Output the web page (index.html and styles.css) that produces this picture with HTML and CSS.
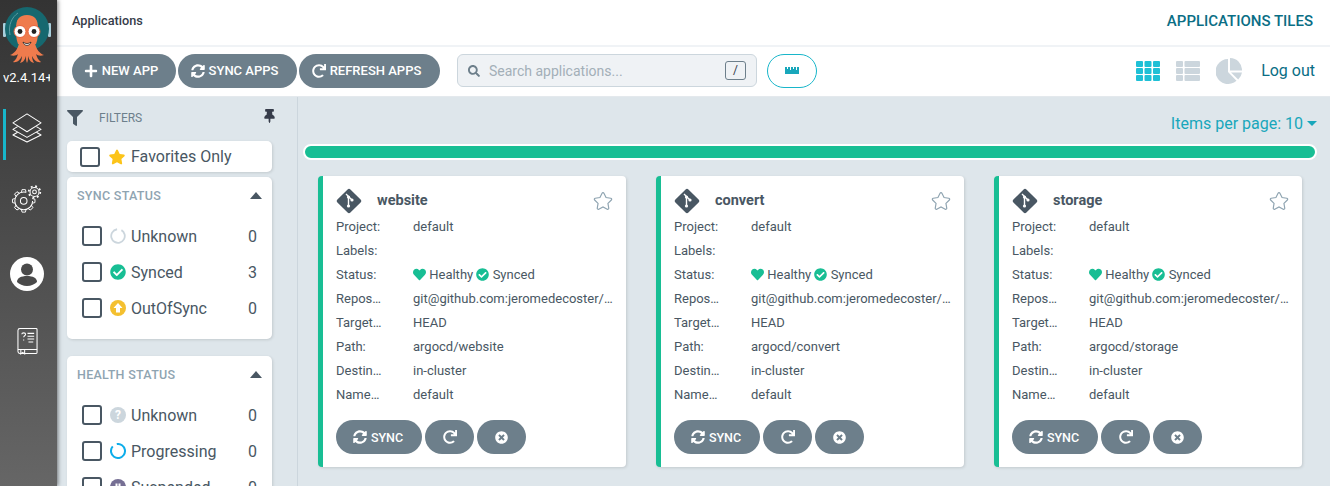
FILE: index.html
```html
<!DOCTYPE html>
<html lang="en">
<head>
    <meta charset="UTF-8">
    <meta name="viewport" content="width=device-width, initial-scale=1.0">
    <title>Applications</title>
    <link rel="stylesheet" href="styles.css">
</head>
<body>
    <svg class="icon-defs" aria-hidden="true">
        <symbol id="i-sync" viewBox="0 0 512 512"><path fill="currentColor" d="M370.72 133.28C339.458 104.008 298.888 87.962 255.848 88c-77.458.068-144.328 53.178-162.791 126.85-1.344 5.363-6.122 9.15-11.651 9.15H24.103c-7.498 0-13.194-6.807-11.807-14.176C33.933 94.924 134.813 8 256 8c66.448 0 126.791 26.136 171.315 68.685L463.03 40.97C478.149 25.851 504 36.559 504 57.941V192c0 13.255-10.745 24-24 24H345.941c-21.382 0-32.09-25.851-16.971-40.971l41.75-41.749zM32 296h134.059c21.382 0 32.09 25.851 16.971 40.971l-41.75 41.75c31.262 29.273 71.835 45.319 114.876 45.28 77.418-.07 144.315-53.144 162.787-126.849 1.344-5.363 6.122-9.15 11.651-9.15h57.304c7.498 0 13.194 6.807 11.807 14.176C478.067 417.076 377.187 504 256 504c-66.448 0-126.791-26.136-171.315-68.685L48.97 471.03C33.851 486.149 8 475.441 8 454.059V320c0-13.255 10.745-24 24-24z"/></symbol>
        <symbol id="i-redo" viewBox="0 0 512 512"><path fill="currentColor" d="M500.33 0h-47.41a12 12 0 0 0-12 12.57l4 82.76A247.42 247.42 0 0 0 256 8C119.34 8 7.9 119.53 8 256.19 8.1 393.07 119.1 504 256 504a247.1 247.1 0 0 0 166.18-63.91 12 12 0 0 0 .48-17.43l-34-34a12 12 0 0 0-16.38-.55A176 176 0 1 1 402.1 157.8l-101.53-4.87a12 12 0 0 0-12.57 12v47.41a12 12 0 0 0 12 12h200.33a12 12 0 0 0 12-12V12a12 12 0 0 0-12-12z"/></symbol>
        <symbol id="i-times" viewBox="0 0 512 512"><path fill="currentColor" d="M256 8C119 8 8 119 8 256s111 248 248 248 248-111 248-248S393 8 256 8zm121.6 313.1c4.7 4.7 4.7 12.3 0 17L338 377.6c-4.7 4.7-12.3 4.7-17 0L256 312l-65.1 65.6c-4.7 4.7-12.3 4.7-17 0L134.4 338c-4.7-4.7-4.7-12.3 0-17l65.6-65-65.6-65.1c-4.7-4.7-4.7-12.3 0-17l39.6-39.6c4.7-4.7 12.3-4.7 17 0l65 65.7 65.1-65.6c4.7-4.7 12.3-4.7 17 0l39.6 39.6c4.7 4.7 4.7 12.3 0 17L312 256l65.6 65.1z"/></symbol>
        <symbol id="i-check" viewBox="0 0 512 512"><path fill="currentColor" d="M504 256c0 136.967-111.033 248-248 248S8 392.967 8 256 119.033 8 256 8s248 111.033 248 248zM227.314 387.314l184-184c6.248-6.248 6.248-16.379 0-22.627l-22.627-22.627c-6.248-6.249-16.379-6.249-22.628 0L216 308.118l-70.059-70.059c-6.248-6.248-16.379-6.248-22.628 0l-22.627 22.627c-6.248 6.248-6.248 16.379 0 22.627l104 104c6.249 6.25 16.379 6.25 22.628.001z"/></symbol>
        <symbol id="i-heart" viewBox="0 0 512 512"><path fill="currentColor" d="M462.3 62.6C407.5 15.9 326 24.3 275.7 76.2L256 96.5l-19.7-20.3C186.1 24.3 104.5 15.9 49.7 62.6c-62.8 53.6-66.1 149.8-9.9 207.9l193.5 199.8c12.5 12.9 32.8 12.9 45.3 0l193.5-199.8c56.3-58.1 53-154.3-9.8-207.9z"/></symbol>
        <symbol id="i-star" viewBox="-20 -20 616 552"><path d="M259.3 17.8L194 150.2 47.9 171.5c-26.2 3.8-36.7 36.1-17.7 54.6l105.7 103-25 145.5c-4.5 26.3 23.2 46 46.4 33.7L288 439.6l130.7 68.7c23.2 12.2 50.9-7.4 46.4-33.7l-25-145.5 105.7-103c19-18.5 8.5-50.8-17.7-54.6L382 150.2 316.7 17.8c-11.7-23.6-45.6-23.9-57.4 0z"/></symbol>
        <symbol id="i-git" viewBox="0 0 26 26">
            <rect x="3.8" y="3.8" width="18.4" height="18.4" rx="2" transform="rotate(45 13 13)" fill="currentColor"/>
            <path d="M10 6l6 6M12.5 9v9" fill="none" stroke="#fff" stroke-width="1.4"/>
            <circle cx="12.5" cy="9" r="1.6" fill="#fff"/><circle cx="16" cy="12" r="1.6" fill="#fff"/><circle cx="12.5" cy="18" r="1.6" fill="#fff"/>
        </symbol>
        <symbol id="i-tooth" viewBox="0 0 6 6" overflow="visible"><path d="M.5 4L1.2 1H4.8L5.500 4" fill="none" stroke="#fff" stroke-width="1"/></symbol>
    </svg>

    <nav class="sidebar">
        <svg class="logo" viewBox="0 0 48 58" aria-label="Argo logo">
            <rect x="0" y="16" width="3" height="14" rx="1" fill="#a8cfdc"/>
            <rect x="45" y="16" width="3" height="14" rx="1" fill="#a8cfdc"/>
            <circle cx="24" cy="22" r="22" fill="#16686f"/>
            <path d="M7 28C5 18 9 10 15 6" fill="none" stroke="#5a9aa0" stroke-width="1"/>
            <path d="M24 8c-8 0-11 5-11 13 0 6 0 11 2 16h18c2-5 2-10 2-16 0-8-3-13-11-13z" fill="#ef7b4d"/>
            <path d="M16 36c-1 6-5 11-9 12 3 1 6 1 8-1-1 3-2 6-5 8 4 1 7-2 9-6 0 3-1 5-2 7 4-1 5-4 6-7 0 3 0 5 1 7 1-2 1-4 1-7 1 3 2 6 6 7-1-2-2-4-2-7 2 4 5 7 9 6-3-2-4-5-5-8 2 2 5 2 8 1-4-1-8-6-9-12z" fill="#ef7b4d"/>
            <circle cx="17" cy="24.5" r="6" fill="#fff" stroke="#e8613a" stroke-width="1"/>
            <circle cx="31" cy="24.5" r="6" fill="#fff" stroke="#e8613a" stroke-width="1"/>
            <circle cx="17" cy="24.5" r="2.4" fill="#222"/><circle cx="31" cy="24.5" r="2.4" fill="#222"/>
            <path d="M20 35c2.5 2 5.5 2 8 0-1 4.5-7 4.5-8 0z" fill="#fff" stroke="#222" stroke-width=".8"/>
        </svg>
        <div class="version">v2.4.14+53d6e2c</div>
        <div class="nav-item active">
            <svg class="nav-icon" viewBox="0 0 32 32"><g fill="none" stroke="#fff" stroke-width="1.1" stroke-linejoin="round"><path d="M16 1L31 10.5 16 20 1 10.5z"/><path d="M6 14.5L1 17.5 16 26l15-8.500-5-3"/><path d="M6 20.5L1 23.5 16 31l15-7.500-5-3"/></g></svg>
        </div>
        <div class="nav-item">
            <svg class="nav-icon" viewBox="0 0 32 32">
                <circle cx="12.5" cy="18" r="3.5" fill="none" stroke="#fff" stroke-width="1.1"/>
                <circle cx="12.5" cy="18" r="9.5" fill="none" stroke="#fff" stroke-width="1.1" stroke-dasharray="47 13"/>
                <use href="#i-tooth" x="9.5" y="5" width="6" height="6"/>
                <use href="#i-tooth" x="9.5" y="5" width="6" height="6" transform="rotate(-45 12.5 18)"/>
                <use href="#i-tooth" x="9.5" y="5" width="6" height="6" transform="rotate(-90 12.5 18)"/>
                <use href="#i-tooth" x="9.5" y="5" width="6" height="6" transform="rotate(-135 12.5 18)"/>
                <use href="#i-tooth" x="9.5" y="5" width="6" height="6" transform="rotate(180 12.5 18)"/>
                <use href="#i-tooth" x="9.5" y="5" width="6" height="6" transform="rotate(135 12.5 18)"/>
                <use href="#i-tooth" x="9.5" y="5" width="6" height="6" transform="rotate(90 12.5 18)"/>
                <circle cx="24" cy="8.5" r="2" fill="none" stroke="#fff" stroke-width="1.1"/>
                <circle cx="24" cy="8.5" r="4.8" fill="none" stroke="#fff" stroke-width="1.1"/>
                <circle cx="24" cy="8.5" r="6.2" fill="none" stroke="#fff" stroke-width="1.8" stroke-dasharray="2 2.87"/>
            </svg>
        </div>
        <div class="nav-item nav-item-user">
            <svg class="nav-user" viewBox="0 0 34 34"><circle cx="17" cy="17" r="17" fill="#fff"/><circle cx="17" cy="12.5" r="6" fill="#4a4a4a"/><path d="M7 25c0-4 4-6 10-6s10 2 10 6c-2 2-6 4-10 4s-8-2-10-4z" fill="#4a4a4a"/></svg>
        </div>
        <div class="nav-item">
            <svg class="nav-book" viewBox="0 0 22 28"><g fill="none" stroke="#fff" stroke-width="1.1"><path d="M3 1h17a1 1 0 0 1 1 1v24a1 1 0 0 1-1 1H3a2 2 0 0 1-2-2V3a2 2 0 0 1 2-2z"/><path d="M1 23h20M4 23v4.5l2-1.5 2 1.500V23"/><path d="M5 7c0-2 4-2 4 0 0 1.500-2 1.500-2 3M7 12.5v1M11 6h7M11 9h7M11 12h7M12 15h5"/></g></svg>
        </div>
    </nav>

    <div class="page">
        <header class="topbar">
            <span class="topbar-title">Applications</span>
            <span class="topbar-crumb">APPLICATIONS TILES</span>
        </header>

        <div class="toolbar">
            <button type="button" class="btn btn-new"><svg class="btn-icon" viewBox="0 0 448 512"><path fill="currentColor" d="M416 208H272V64c0-17.67-14.33-32-32-32h-32c-17.67 0-32 14.33-32 32v144H32c-17.67 0-32 14.33-32 32v32c0 17.67 14.33 32 32 32h144v144c0 17.67 14.33 32 32 32h32c17.67 0 32-14.33 32-32V304h144c17.67 0 32-14.33 32-32v-32c0-17.67-14.33-32-32-32z"/></svg>NEW APP</button>
            <button type="button" class="btn btn-sync"><svg class="btn-icon"><use href="#i-sync"/></svg>SYNC APPS</button>
            <button type="button" class="btn btn-refresh"><svg class="btn-icon"><use href="#i-redo"/></svg>REFRESH APPS</button>

            <div class="search">
                <svg class="search-icon" viewBox="0 0 512 512"><path fill="currentColor" d="M505 442.7L405.3 343c-4.5-4.5-10.6-7-17-7H372c27.6-35.3 44-79.7 44-128C416 93.1 322.9 0 208 0S0 93.1 0 208s93.1 208 208 208c48.3 0 92.7-16.4 128-44v16.3c0 6.4 2.5 12.5 7 17l99.7 99.7c9.4 9.4 24.6 9.4 33.9 0l28.3-28.3c9.4-9.4 9.4-24.6.1-34zM208 336c-70.7 0-128-57.2-128-128 0-70.7 57.2-128 128-128 70.7 0 128 57.2 128 128 0 70.7-57.2 128-128 128z"/></svg>
                <span class="search-text">Search applications...</span>
                <span class="search-key">/</span>
            </div>
            <button type="button" class="ruler-btn"><svg class="ruler" viewBox="0 0 15 7"><path fill="currentColor" d="M0 0h2v2h1V0h2v3h1V0h2v2h1V0h2v3h1V0h2v7H0z"/></svg></button>

            <div class="views">
                <svg class="view-icon" viewBox="0 0 24 20"><g fill="#1fc0d6"><rect width="7" height="6" rx="1"/><rect x="8.5" width="7" height="6" rx="1"/><rect x="17" width="7" height="6" rx="1"/><rect y="7" width="7" height="6" rx="1"/><rect x="8.5" y="7" width="7" height="6" rx="1"/><rect x="17" y="7" width="7" height="6" rx="1"/><rect y="14" width="7" height="6" rx="1"/><rect x="8.5" y="14" width="7" height="6" rx="1"/><rect x="17" y="14" width="7" height="6" rx="1"/></g></svg>
                <svg class="view-icon" viewBox="0 0 24 20"><g fill="#ccd6dd"><rect width="7" height="6" rx="1"/><rect x="8.5" width="15.5" height="6" rx="1"/><rect y="7" width="7" height="6" rx="1"/><rect x="8.5" y="7" width="15.5" height="6" rx="1"/><rect y="14" width="7" height="6" rx="1"/><rect x="8.5" y="14" width="15.5" height="6" rx="1"/></g></svg>
                <svg class="view-pie" viewBox="0 0 26 26"><g fill="#ccd6dd"><path d="M12 1a12.5 12.5 0 1 0 8.5 21.7L12 14z"/><path d="M14 0a12 12 0 0 1 12 12.5H14z"/><path d="M15 14.5h11a12 12 0 0 1-3.8 7z"/></g></svg>
                <span class="logout">Log out</span>
            </div>
        </div>

        <div class="content">
            <aside class="filters">
                <div class="filters-head">
                    <svg class="filters-funnel" viewBox="0 0 512 512"><path fill="currentColor" d="M487.976 0H24.028C2.71 0-8.047 25.866 7.058 40.971L192 225.941V432c0 7.831 3.821 15.17 10.237 19.662l80 55.98C298.02 518.69 320 507.493 320 487.98V225.941l184.947-184.97C520.021 25.896 509.338 0 487.976 0z"/></svg>
                    <span class="filters-title">FILTERS</span>
                    <svg class="filters-pin" viewBox="0 0 384 512"><path fill="currentColor" d="M298.028 214.267L285.793 96H328c13.255 0 24-10.745 24-24V24c0-13.255-10.745-24-24-24H56C42.745 0 32 10.745 32 24v48c0 13.255 10.745 24 24 24h42.207L85.972 214.267C37.465 236.82 0 277.261 0 328c0 13.255 10.745 24 24 24h136v104.007c0 1.242.289 2.467.845 3.578l24 48c2.941 5.882 11.364 5.893 14.311 0l24-48a8.008 8.008 0 0 0 .845-3.578V352h136c13.255 0 24-10.745 24-24-.001-51.183-37.983-91.42-85.973-113.733z"/></svg>
                </div>

                <div class="filter-card favorites">
                    <span class="checkbox"></span>
                    <svg class="fav-star"><use href="#i-star"/></svg>
                    <span class="filter-label">Favorites Only</span>
                </div>

                <div class="filter-card filter-group">
                    <div class="group-head"><span>SYNC STATUS</span><span class="caret-up"></span></div>
                    <div class="filter-row">
                        <span class="checkbox"></span>
                        <svg class="status-icon" viewBox="0 0 16 16"><circle cx="8" cy="8" r="6.8" fill="none" stroke="#ccd6dd" stroke-width="1.8" stroke-dasharray="38 5" transform="rotate(-60 8 8)"/></svg>
                        <span class="filter-label">Unknown</span><span class="filter-count">0</span>
                    </div>
                    <div class="filter-row">
                        <span class="checkbox"></span>
                        <svg class="status-icon synced"><use href="#i-check"/></svg>
                        <span class="filter-label">Synced</span><span class="filter-count">3</span>
                    </div>
                    <div class="filter-row">
                        <span class="checkbox"></span>
                        <svg class="status-icon" viewBox="0 0 16 16"><circle cx="8" cy="8" r="8" fill="#f4c030"/><path d="M8 3L12.5 8H10v4.5H6V8H3.5z" fill="#fff"/></svg>
                        <span class="filter-label">OutOfSync</span><span class="filter-count">0</span>
                    </div>
                </div>

                <div class="filter-card filter-group">
                    <div class="group-head"><span>HEALTH STATUS</span><span class="caret-up"></span></div>
                    <div class="filter-row">
                        <span class="checkbox"></span>
                        <span class="status-icon help">?</span>
                        <span class="filter-label">Unknown</span><span class="filter-count">0</span>
                    </div>
                    <div class="filter-row">
                        <span class="checkbox"></span>
                        <svg class="status-icon" viewBox="0 0 16 16"><circle cx="8" cy="8" r="7" fill="none" stroke="#0dadea" stroke-width="2" stroke-dasharray="39 5" transform="rotate(-100 8 8)"/></svg>
                        <span class="filter-label">Progressing</span><span class="filter-count">0</span>
                    </div>
                    <div class="filter-row">
                        <span class="checkbox"></span>
                        <svg class="status-icon" viewBox="0 0 16 16"><circle cx="8" cy="8" r="8" fill="#766f94"/><path d="M5.5 4.5h2v7h-2zM8.5 4.5h2v7h-2z" fill="#fff"/></svg>
                        <span class="filter-label">Suspended</span><span class="filter-count">0</span>
                    </div>
                </div>
            </aside>

            <main class="main">
                <div class="per-page">Items per page: 10 <span class="caret-down"></span></div>
                <div class="health-bar"></div>

                <div class="cards">
                    <div class="app-card">
                        <div class="card-head">
                            <svg class="git-icon"><use href="#i-git"/></svg>
                            <span class="card-name">website</span>
                            <svg class="card-star"><use href="#i-star"/></svg>
                        </div>
                        <div class="card-row"><span class="card-key">Project:</span><span class="card-val">default</span></div>
                        <div class="card-row"><span class="card-key">Labels:</span><span class="card-val"></span></div>
                        <div class="card-row"><span class="card-key">Status:</span><span class="card-val"><svg class="mini-icon"><use href="#i-heart"/></svg> Healthy <svg class="mini-icon"><use href="#i-check"/></svg> Synced</span></div>
                        <div class="card-row"><span class="card-key">Repos…</span><span class="card-val">git@github.com:jeromedecoster/…</span></div>
                        <div class="card-row"><span class="card-key">Target…</span><span class="card-val">HEAD</span></div>
                        <div class="card-row"><span class="card-key">Path:</span><span class="card-val">argocd/website</span></div>
                        <div class="card-row"><span class="card-key">Destin…</span><span class="card-val">in-cluster</span></div>
                        <div class="card-row"><span class="card-key">Name…</span><span class="card-val">default</span></div>
                        <div class="card-actions">
                            <button type="button" class="btn btn-card-sync"><svg class="btn-icon"><use href="#i-sync"/></svg>SYNC</button>
                            <button type="button" class="btn btn-card-icon"><svg class="btn-icon"><use href="#i-redo"/></svg></button>
                            <button type="button" class="btn btn-card-icon"><svg class="btn-icon small"><use href="#i-times"/></svg></button>
                        </div>
                    </div>

                    <div class="app-card">
                        <div class="card-head">
                            <svg class="git-icon"><use href="#i-git"/></svg>
                            <span class="card-name">convert</span>
                            <svg class="card-star"><use href="#i-star"/></svg>
                        </div>
                        <div class="card-row"><span class="card-key">Project:</span><span class="card-val">default</span></div>
                        <div class="card-row"><span class="card-key">Labels:</span><span class="card-val"></span></div>
                        <div class="card-row"><span class="card-key">Status:</span><span class="card-val"><svg class="mini-icon"><use href="#i-heart"/></svg> Healthy <svg class="mini-icon"><use href="#i-check"/></svg> Synced</span></div>
                        <div class="card-row"><span class="card-key">Repos…</span><span class="card-val">git@github.com:jeromedecoster/…</span></div>
                        <div class="card-row"><span class="card-key">Target…</span><span class="card-val">HEAD</span></div>
                        <div class="card-row"><span class="card-key">Path:</span><span class="card-val">argocd/convert</span></div>
                        <div class="card-row"><span class="card-key">Destin…</span><span class="card-val">in-cluster</span></div>
                        <div class="card-row"><span class="card-key">Name…</span><span class="card-val">default</span></div>
                        <div class="card-actions">
                            <button type="button" class="btn btn-card-sync"><svg class="btn-icon"><use href="#i-sync"/></svg>SYNC</button>
                            <button type="button" class="btn btn-card-icon"><svg class="btn-icon"><use href="#i-redo"/></svg></button>
                            <button type="button" class="btn btn-card-icon"><svg class="btn-icon small"><use href="#i-times"/></svg></button>
                        </div>
                    </div>

                    <div class="app-card">
                        <div class="card-head">
                            <svg class="git-icon"><use href="#i-git"/></svg>
                            <span class="card-name">storage</span>
                            <svg class="card-star"><use href="#i-star"/></svg>
                        </div>
                        <div class="card-row"><span class="card-key">Project:</span><span class="card-val">default</span></div>
                        <div class="card-row"><span class="card-key">Labels:</span><span class="card-val"></span></div>
                        <div class="card-row"><span class="card-key">Status:</span><span class="card-val"><svg class="mini-icon"><use href="#i-heart"/></svg> Healthy <svg class="mini-icon"><use href="#i-check"/></svg> Synced</span></div>
                        <div class="card-row"><span class="card-key">Repos…</span><span class="card-val">git@github.com:jeromedecoster/…</span></div>
                        <div class="card-row"><span class="card-key">Target…</span><span class="card-val">HEAD</span></div>
                        <div class="card-row"><span class="card-key">Path:</span><span class="card-val">argocd/storage</span></div>
                        <div class="card-row"><span class="card-key">Destin…</span><span class="card-val">in-cluster</span></div>
                        <div class="card-row"><span class="card-key">Name…</span><span class="card-val">default</span></div>
                        <div class="card-actions">
                            <button type="button" class="btn btn-card-sync"><svg class="btn-icon"><use href="#i-sync"/></svg>SYNC</button>
                            <button type="button" class="btn btn-card-icon"><svg class="btn-icon"><use href="#i-redo"/></svg></button>
                            <button type="button" class="btn btn-card-icon"><svg class="btn-icon small"><use href="#i-times"/></svg></button>
                        </div>
                    </div>
                </div>
            </main>
        </div>
    </div>
</body>
</html>
```

FILE: styles.css
```css
* {
    box-sizing: border-box;
}

body {
    display: flex;
    height: 100vh;
    margin: 0;
    overflow: hidden;
    background-color: #fff;
    color: #495763;
    font-family: Roboto, "Liberation Sans", sans-serif;
}

.icon-defs {
    position: absolute;
    width: 0;
    height: 0;
}

/* sidebar */
.sidebar {
    flex: 0 0 57px;
    display: flex;
    flex-direction: column;
    align-items: center;
    padding: 7px 3px 0 0;
    background: linear-gradient(180deg, #333 0%, #666 100%);
    box-shadow: 1px 0 4px rgba(0, 0, 0, 0.5);
    z-index: 2;
}

.logo {
    width: 48px;
    height: 58px;
    flex: none;
}

.version {
    width: 47px;
    margin: 5px 1px 0 0;
    overflow: hidden;
    color: #fff;
    font-size: 13px;
    line-height: 16px;
    white-space: nowrap;
}

.nav-item {
    display: flex;
    justify-content: center;
    align-items: center;
    flex: none;
    width: 100%;
    height: 51px;
    margin-bottom: 20px;
    padding-bottom: 14px;
}

.nav-item-user {
    padding-bottom: 6px;
}

.nav-item.active {
    margin-top: 23px;
    background: linear-gradient(#18b6ca, #18b6ca) 3px 0 / 3px 100% no-repeat;
}

.nav-icon {
    width: 30px;
    height: 30px;
    overflow: visible;
}

.nav-user {
    width: 34px;
    height: 34px;
}

.nav-book {
    width: 21px;
    height: 28px;
}

/* top */
.page {
    flex: 1;
    display: flex;
    flex-direction: column;
    min-width: 0;
}

.topbar {
    flex: 0 0 47px;
    display: flex;
    justify-content: space-between;
    align-items: flex-start;
    padding: 12px 17px 0 15px;
    border-bottom: 2px solid #f0f3f6;
}

.topbar-title {
    color: #363c4a;
    font-size: 12.7px;
    font-weight: 500;
    line-height: 17px;
}

.topbar-crumb {
    color: #0a6e85;
    font-size: 15px;
    font-weight: 500;
    line-height: 18px;
}

.toolbar {
    flex: 0 0 50px;
    display: flex;
    align-items: center;
    padding: 0 15px 2px;
    border-bottom: 1px solid #e4e9ed;
}

.btn {
    display: inline-flex;
    justify-content: center;
    align-items: center;
    height: 34px;
    margin-right: 2px;
    padding: 0;
    border: none;
    border-radius: 17px;
    background-color: #6d7f8b;
    color: #fff;
    font-family: inherit;
    font-size: 13px;
    font-weight: 500;
    cursor: pointer;
}

.btn-new {
    width: 104px;
    padding-right: 6px;
}

.btn-sync {
    width: 119px;
    padding-right: 6px;
}

.btn-refresh {
    width: 141px;
    padding-right: 6px;
}

.btn-icon {
    width: 14px;
    height: 14px;
    margin-right: 4px;
}

.search {
    display: flex;
    align-items: center;
    width: 300px;
    height: 33px;
    margin-left: 15px;
    padding: 0 10px;
    border: 1px solid #ccd6dd;
    border-radius: 6px;
    background-color: #eff2f5;
}

.search-icon {
    width: 12px;
    height: 12px;
    color: #6d7f8b;
}

.search-text {
    flex: 1;
    margin-left: 9px;
    color: #a3afb8;
    font-size: 14px;
}

.search-key {
    width: 21px;
    height: 19px;
    border: 1px solid #6d7f8b;
    border-radius: 3px;
    color: #363c4a;
    font-size: 12px;
    line-height: 17px;
    text-align: center;
}

.ruler-btn {
    display: flex;
    justify-content: center;
    align-items: center;
    width: 50px;
    height: 34px;
    margin-left: 10px;
    padding: 0;
    border: 1px solid #18b6ca;
    border-radius: 17px;
    background-color: #fff;
    color: #18a7bb;
}

.ruler {
    width: 15px;
    height: 7px;
}

.views {
    display: flex;
    align-items: center;
    margin-left: auto;
}

.view-icon {
    width: 24px;
    height: 22px;
    margin-right: 16px;
}

.view-pie {
    width: 26px;
    height: 26px;
    margin-right: 19px;
}

.logout {
    color: #0a6e85;
    font-size: 16px;
}

/* filters */
.content {
    flex: 1;
    display: flex;
    min-height: 0;
    background-color: #dee6eb;
}

.filters {
    flex: 0 0 241px;
    padding: 0 25px 0 10px;
    border-right: 1px solid #ccd6dd;
    overflow: hidden;
}

.filters-head {
    display: flex;
    align-items: center;
    height: 44px;
    padding-bottom: 3px;
}

.filters-funnel {
    width: 16px;
    height: 16px;
    color: #495763;
}

.filters-title {
    flex: 1;
    margin-left: 16px;
    color: #6d7f8b;
    font-size: 12px;
}

.filters-pin {
    width: 11px;
    height: 14px;
    margin-right: -3px;
    margin-bottom: 4px;
    color: #363c4a;
}

.filter-card {
    background-color: #fff;
    border-radius: 5px;
    box-shadow: 1px 1px 3px rgba(0, 0, 0, 0.12);
}

.favorites {
    display: flex;
    align-items: center;
    height: 31px;
    margin-bottom: 5px;
    padding-left: 13px;
}

.checkbox {
    flex: none;
    width: 20px;
    height: 20px;
    border: 2px solid #495763;
    border-radius: 3px;
    background-color: #fff;
}

.fav-star {
    flex: none;
    width: 18px;
    height: 16px;
    margin: 0 5px 0 8px;
    fill: #fcc419;
}

.filter-label {
    flex: 1;
    font-size: 16px;
}

.filter-group {
    height: 162px;
    margin-bottom: 17px;
    padding: 0 15px;
}

.group-head {
    display: flex;
    justify-content: space-between;
    align-items: center;
    height: 37px;
    margin: 0 0 4px -5px;
    color: #8fa4b1;
    font-size: 12.5px;
    font-weight: 500;
    letter-spacing: 0.3px;
}

.caret-up {
    width: 0;
    height: 0;
    margin-right: -5px;
    border-left: 6px solid transparent;
    border-right: 6px solid transparent;
    border-bottom: 7px solid #495763;
}

.filter-row {
    display: flex;
    align-items: center;
    height: 36px;
}

.status-icon {
    flex: none;
    width: 16px;
    height: 16px;
    margin: 0 5px 0 8px;
}

.synced {
    color: #18be94;
}

.help {
    border-radius: 50%;
    background-color: #ccd6dd;
    color: #fff;
    font-size: 12px;
    font-weight: 700;
    line-height: 16px;
    text-align: center;
}

.filter-count {
    font-size: 16px;
}

/* main */
.main {
    flex: 1;
    min-width: 0;
    padding: 0 13px 0 5px;
}

.per-page {
    height: 47px;
    padding-top: 17px;
    color: #18a7bb;
    font-size: 16px;
    line-height: 19px;
    text-align: right;
}

.caret-down {
    display: inline-block;
    width: 0;
    height: 0;
    margin-bottom: 3px;
    border-left: 5px solid transparent;
    border-right: 5px solid transparent;
    border-top: 5px solid #18a7bb;
}

.health-bar {
    height: 16px;
    border: 2px solid #fff;
    border-radius: 8px;
    background-color: #18be94;
}

.cards {
    display: grid;
    grid-template-columns: repeat(3, 308px);
    gap: 30px;
    margin: 16px 0 0 15px;
}

.app-card {
    height: 291px;
    padding: 10px 13px 0;
    border-left: 5px solid #18be94;
    border-radius: 4px;
    background-color: #fff;
    box-shadow: 1px 1px 3px rgba(0, 0, 0, 0.12);
    font-size: 13px;
}

.card-head {
    display: flex;
    align-items: center;
    height: 29px;
}

.git-icon {
    flex: none;
    width: 26px;
    height: 26px;
    color: #495763;
}

.card-name {
    flex: 1;
    margin-left: 15px;
    font-size: 14.5px;
    font-weight: 700;
}

.card-star {
    flex: none;
    width: 20px;
    height: 18px;
    fill: none;
    stroke: #8fa4b1;
    stroke-width: 36px;
}

.card-row {
    display: flex;
    height: 24px;
    line-height: 24px;
}

.card-key {
    flex: 0 0 77px;
}

.card-val {
    white-space: nowrap;
}

.mini-icon {
    width: 13px;
    height: 13px;
    vertical-align: -2px;
    color: #18be94;
}

.card-actions {
    display: flex;
    gap: 1px;
    margin-top: 13px;
}

.btn-card-sync {
    width: 86px;
    padding-right: 2px;
    font-size: 12.5px;
}

.btn-card-icon {
    width: 49px;
}

.btn-card-icon .btn-icon {
    margin-right: 0;
}

.btn-icon.small {
    width: 13px;
    height: 13px;
}
```
